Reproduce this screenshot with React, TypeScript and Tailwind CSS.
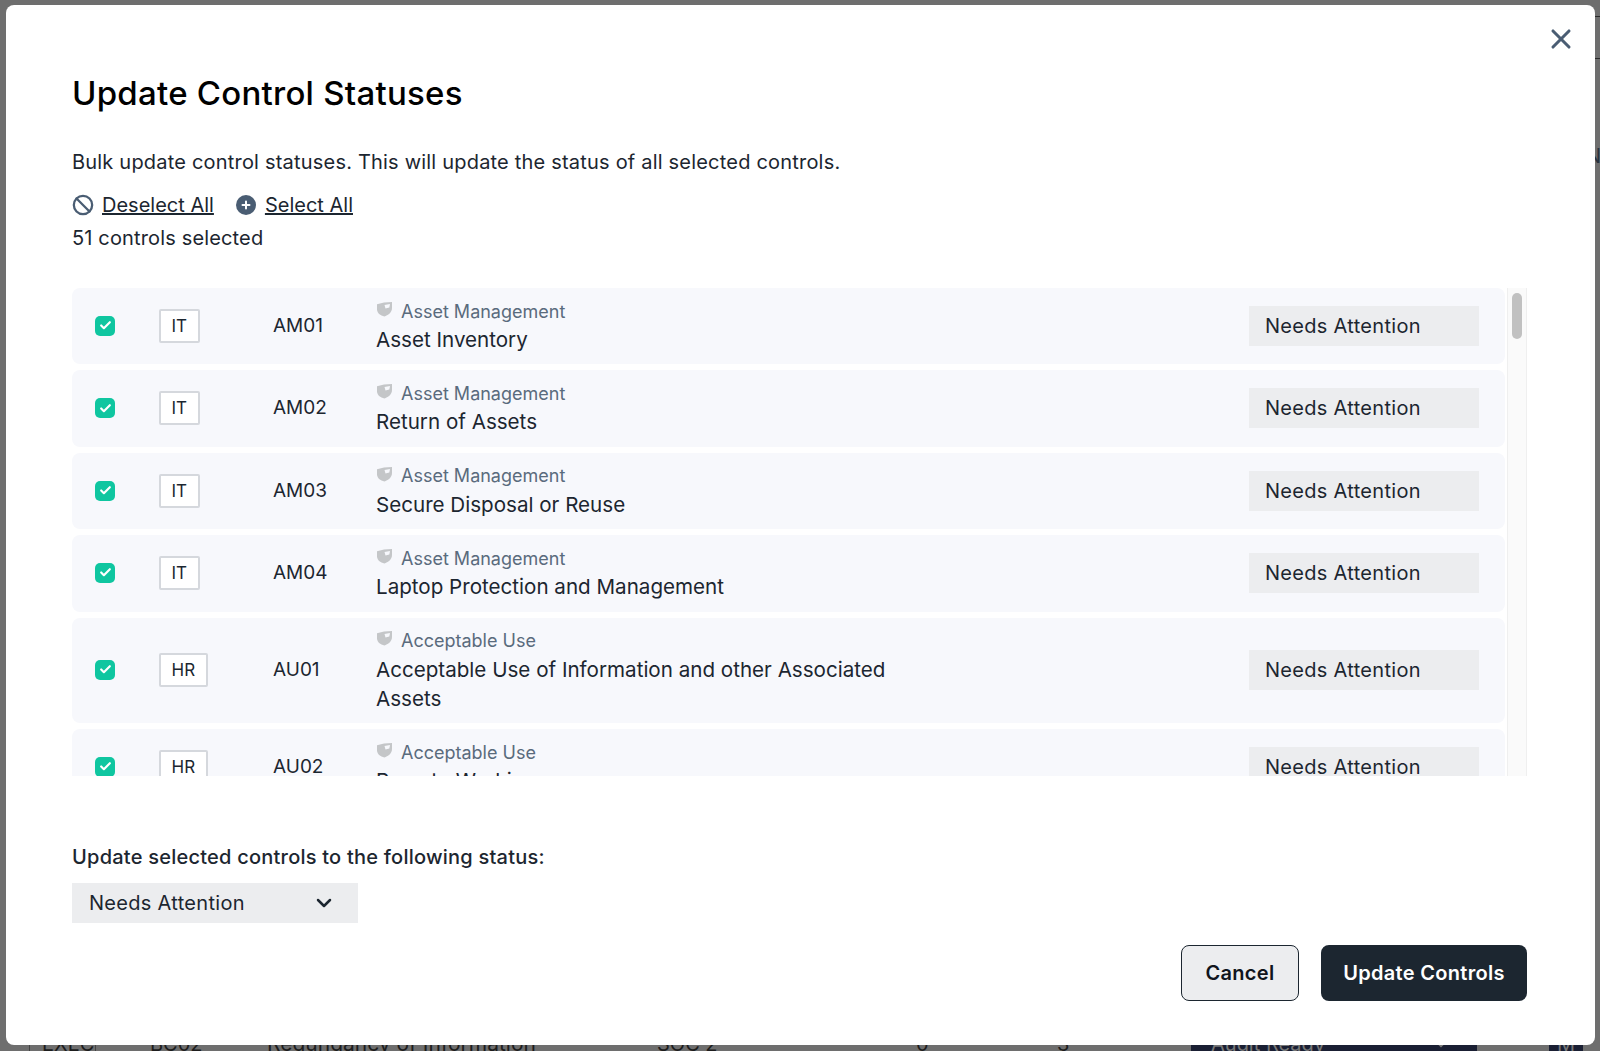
import React from 'react';
import { Ban, Check, ChevronDown, X } from 'lucide-react';

type ControlRow = {
    team: string;
    code: string;
    category: string;
    title: string;
};

const rows: ControlRow[] = [
    { team: 'IT', code: 'AM01', category: 'Asset Management', title: 'Asset Inventory' },
    { team: 'IT', code: 'AM02', category: 'Asset Management', title: 'Return of Assets' },
    { team: 'IT', code: 'AM03', category: 'Asset Management', title: 'Secure Disposal or Reuse' },
    { team: 'IT', code: 'AM04', category: 'Asset Management', title: 'Laptop Protection and Management' },
    { team: 'HR', code: 'AU01', category: 'Acceptable Use', title: 'Acceptable Use of Information and other Associated Assets' },
    { team: 'HR', code: 'AU02', category: 'Acceptable Use', title: 'Remote Working' },
];

const ShieldIcon = () => (
    <svg width="17" height="17" viewBox="0 0 17 17" className="-mt-[4px] shrink-0">
        <path d="M1 3.200 8 1.500 16 1v6c0 4-3.200 7-7.500 8.500C4.200 14.500 1 12 1 8.200z" fill="#c4c6c8" />
        <path d="M8.500 4 14 3 13.300 6.500 9.500 7.500z" fill="#f7f8fc" />
    </svg>
);

const PlusCircle = () => (
    <svg width="20" height="20" viewBox="0 0 20 20" className="shrink-0">
        <circle cx="10" cy="10" r="10" fill="#4a5d73" />
        <path d="M10 6.500v7M6.500 10h7" stroke="#fff" strokeWidth="2" strokeLinecap="round" />
    </svg>
);

const Row: React.FC<{ row: ControlRow }> = ({ row }) => (
    <div className="flex shrink-0 items-center rounded-lg bg-[#f7f8fc] pl-[23px] pr-[26px] pt-[9.500px] pb-[10.500px]">
        <div className="flex h-[20px] w-[20px] items-center justify-center rounded-[5px] bg-[#0fc6a0]">
            <Check size={13} strokeWidth={4} className="text-white" />
        </div>
        <div className="ml-[44px] w-[114px]">
            <span className="inline-block rounded-[2px] border-2 border-[#d5d8dd] bg-white px-[10.500px] text-[17px] leading-[30px] text-[#1c2630]">
                {row.team}
            </span>
        </div>
        <div className="w-[103px] pt-[1px] text-[19px] text-[#1c2630]">{row.code}</div>
        <div className="w-[530px]">
            <div className="flex items-center gap-[8px] text-[18px] leading-[27.400px] text-[#5a6b7d]">
                <ShieldIcon />
                <span>{row.category}</span>
            </div>
            <div className="text-[20.600px] leading-[29px] text-[#1c2630]">{row.title}</div>
        </div>
        <div className="ml-auto flex h-[40px] w-[230px] items-center bg-[#ecedef] pl-[16px] text-[20px] tracking-[0.3px] text-[#1c2630]">
            Needs Attention
        </div>
    </div>
);

export default function App() {
    return (
        <div className="relative flex h-[1051px] w-[1600px] flex-col overflow-hidden bg-[#6e6e6e] font-['Inter',sans-serif]">
            {/* Page behind the dialog, only slivers of it show */}
            <div className="mt-[16px] ml-[1560px] h-[43px] w-[80px] border-y border-[#2a2a2a]" />
            <div className="mt-[82px] ml-[1586px] text-[20px] text-[#2a3340]">Ne</div>
            <div className="mt-auto flex h-[14px] items-center text-[20px] leading-[14px] text-[#1d1d1d]">
                <div className="ml-[29px] w-[121px]">
                    <span className="inline-block w-[67px] border-x border-[#444] pl-[12px]">EXEC</span>
                </div>
                <span className="w-[117px]">BC02</span>
                <span className="w-[390px] text-[21px]">Redundancy of Information</span>
                <span className="w-[259px]">SOC 2</span>
                <span className="w-[141px]">0</span>
                <span className="w-[134px]">3</span>
                <div className="flex h-[14px] w-[286px] items-center justify-between bg-[#1a1f33] pl-[20px] pr-[26px] text-[#777]">
                    <span>Audit Ready</span>
                    <ChevronDown size={20} />
                </div>
                <div className="ml-[72px] h-[14px] w-[34px] bg-[#1a1f33] text-center text-[#777]">M</div>
            </div>

            <div className="absolute left-[6px] top-[5px] flex h-[1040px] w-[1589px] flex-col rounded-lg bg-white pl-[66px] pr-[68px]">
                <button className="absolute right-[18px] top-[18px] text-[#4a5d73]">
                    <X size={32} strokeWidth={2.300} />
                </button>

                <h1 className="mt-[66px] text-[33px] font-medium leading-[44px] tracking-[0.25px] text-black">
                    Update Control Statuses
                </h1>
                <p className="mt-[33px] text-[20px] leading-[28px] tracking-[0.2px] text-[#1c2630]">
                    Bulk update control statuses. This will update the status of all selected controls.
                </p>
                <div className="mt-[15px] flex items-center text-[20px] leading-[28px] text-[#1c2630]">
                    <Ban size={22} strokeWidth={2.500} className="text-[#4a5d73]" />
                    <a className="ml-[8px] underline">Deselect All</a>
                    <span className="ml-[22px]"><PlusCircle /></span>
                    <a className="ml-[9px] underline">Select All</a>
                </div>
                <div className="mt-[5px] text-[20px] leading-[28px] tracking-[0.15px] text-[#1c2630]">51 controls selected</div>

                <div className="mt-[36px] flex h-[488px] overflow-hidden">
                    <div className="flex w-[1433px] flex-col gap-[6px]">
                        {rows.map(row => <Row key={row.code} row={row} />)}
                    </div>
                    <div className="ml-[2px] w-[20px] border-l border-r border-[#efefef] bg-[#fafafa] px-[4px] pt-[5px]">
                        <div className="h-[46px] rounded-full bg-[#c1c1c1]" />
                    </div>
                </div>

                <div className="mt-[67px] text-[20px] font-medium leading-[28px] tracking-[0.23px] text-[#1c2630]">
                    Update selected controls to the following status:
                </div>
                <div className="mt-[12px] flex h-[40px] w-[286px] items-center justify-between bg-[#ecedef] pl-[17px] pr-[22px] text-[20px] tracking-[0.3px] text-[#1c2630]">
                    <span>Needs Attention</span>
                    <ChevronDown size={24} strokeWidth={2.500} />
                </div>

                <div className="mt-[22px] flex justify-end gap-[22px]">
                    <button className="h-[56px] w-[118px] rounded-lg border border-[#1c2630] bg-[#ecedef] text-[20px] font-semibold tracking-[0.3px] text-[#10151c]">
                        Cancel
                    </button>
                    <button className="h-[56px] w-[206px] rounded-lg bg-[#1c2630] text-[20px] font-semibold tracking-[0.3px] text-white">
                        Update Controls
                    </button>
                </div>
            </div>
        </div>
    );
}
